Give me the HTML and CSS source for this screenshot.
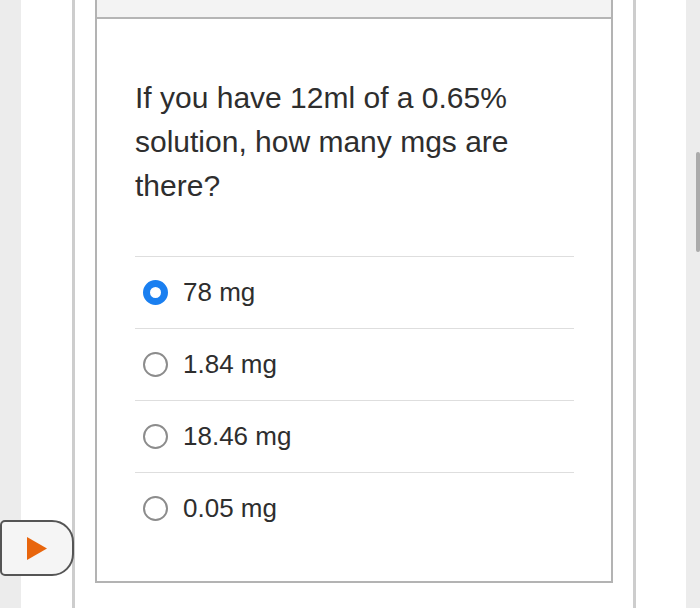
FILE: index.html
```html
<!DOCTYPE html>
<html>
<head>
<meta charset="utf-8">
<link rel="stylesheet" href="styles.css">
</head>
<body>
<div class="page">
  <div class="gutter"></div>
  <div class="space-left"></div>
  <div class="rule"></div>
  <div class="space-mid"></div>
  <div class="card">
    <div class="card-head"></div>
    <div class="card-body">
      <p class="question">If you have 12ml of a 0.65% solution, how many mgs are there?</p>
      <ul class="options">
        <li class="option"><span class="radio checked"></span><span class="label">78 mg</span></li>
        <li class="option"><span class="radio"></span><span class="label">1.84 mg</span></li>
        <li class="option"><span class="radio"></span><span class="label">18.46 mg</span></li>
        <li class="option"><span class="radio"></span><span class="label">0.05 mg</span></li>
      </ul>
    </div>
  </div>
  <div class="space-mid"></div>
  <div class="rule"></div>
  <div class="space-right"></div>
  <div class="gutter gutter-right"><div class="scrollbar"></div></div>
</div>
<button class="play" type="button" aria-label="Play">
  <svg width="20" height="23" viewBox="0 0 20 23"><polygon points="0,0 20,11.5 0,23" fill="#e8650c"/></svg>
</button>
</body>
</html>
```
FILE: styles.css
```css
html, body {
  margin: 0;
  padding: 0;
  background: #ffffff;
}
body {
  width: 700px;
  height: 610px;
  overflow: hidden;
  position: relative;
  font-family: "Liberation Sans", Arial, sans-serif;
  color: #333333;
}
.page {
  display: flex;
  height: 608px;
}
.gutter {
  width: 21px;
  background: #ececec;
  flex: none;
}
.gutter-right {
  width: 14px;
  position: relative;
}
.space-left { width: 51px; flex: none; }
.space-mid { width: 20px; flex: none; }
.space-right { width: 50px; flex: none; }
.rule {
  width: 3px;
  background: #cdcdcd;
  flex: none;
}
.card {
  width: 518px;
  flex: none;
  align-self: flex-start;
  border: 2px solid #b3b3b3;
  border-top: none;
  box-sizing: border-box;
  background: #ffffff;
}
.card-head {
  height: 17px;
  background: #f3f3f3;
  border-bottom: 2px solid #b5b5b5;
}
.card-body {
  padding: 57px 37px 37px 38px;
}
.question {
  margin: 0 0 48px 0;
  font-size: 30px;
  line-height: 44px;
  color: #2e2e2e;
}
.options {
  list-style: none;
  margin: 0;
  padding: 0;
}
.option {
  display: flex;
  align-items: center;
  gap: 15px;
  height: 71px;
  border-top: 1px solid #dedede;
  padding-left: 8px;
}
.radio {
  width: 25px;
  height: 25px;
  box-sizing: border-box;
  border-radius: 50%;
  border: 2px solid #8c8c8c;
  flex: none;
}
.radio.checked {
  border: 7px solid #1a7ff0;
}
.label {
  font-size: 26px;
  color: #2e2e2e;
}
.scrollbar {
  position: absolute;
  left: 10px;
  top: 152px;
  width: 4px;
  height: 100px;
  border-radius: 2px;
  background: #ababab;
}
.play {
  position: absolute;
  left: 0;
  top: 520px;
  width: 74px;
  height: 56px;
  box-sizing: border-box;
  border: 2px solid #555555;
  border-radius: 5px 22px 22px 5px;
  background: #f5f5f5;
  padding: 0 0 0 25px;
  display: flex;
  align-items: center;
  margin: 0;
}
.play svg { display: block; }
```
